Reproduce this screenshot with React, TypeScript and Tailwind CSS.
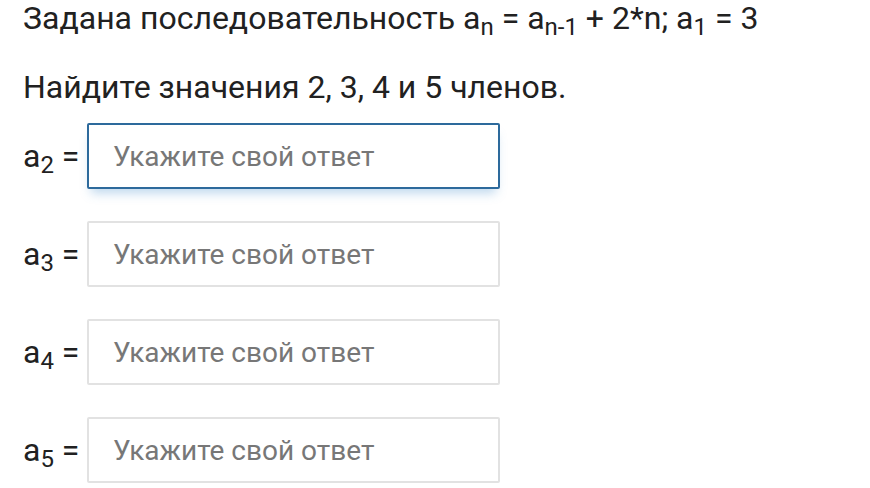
import React from "react";

const rows = [2, 3, 4, 5];

const App: React.FC = () => {
  return (
    <div
      className="w-[870px] h-[488px] overflow-hidden bg-white pl-[23px] text-[#212121]"
      style={{ fontFamily: "Roboto, 'Noto Sans', sans-serif" }}
    >
      <p className="text-[32px] leading-[36px]">
        Задана последовательность a<sub>n</sub> = a<sub>n-1</sub> + 2*n; a<sub>1</sub> = 3
      </p>
      <p className="mt-[33px] text-[32px] leading-[36px]">
        Найдите значения 2, 3, 4 и 5 членов.
      </p>
      <div className="mt-[18px] flex flex-col gap-[32px]">
        {rows.map((n) => (
          <div key={n} className="flex items-center">
            <label className="w-[64px] shrink-0 text-[32px] leading-none">
              a<sub>{n}</sub> =
            </label>
            <input
              type="text"
              placeholder="Укажите свой ответ"
              className={
                n === 2
                  ? "w-[413px] h-[66px] border-2 border-[#2d6a9c] rounded-[2px] px-[24px] text-[28px] text-[#333] placeholder:text-[#777] outline-none shadow-[0_8px_10px_-4px_rgba(66,139,202,0.35)]"
                  : "w-[413px] h-[66px] border-2 border-[#e2e2e2] rounded-[2px] px-[24px] text-[28px] text-[#333] placeholder:text-[#777] outline-none"
              }
            />
          </div>
        ))}
      </div>
    </div>
  );
};

export default App;
